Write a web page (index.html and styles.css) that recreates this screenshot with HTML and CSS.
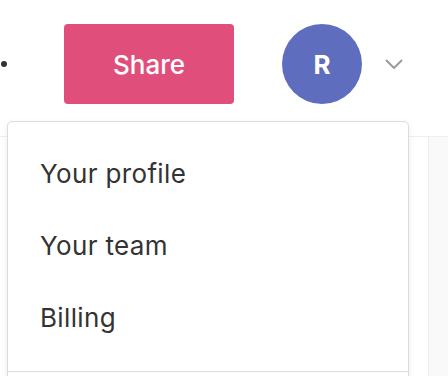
FILE: index.html
```html
<!DOCTYPE html>
<html>
<head>
<meta charset="utf-8">
<link rel="stylesheet" href="styles.css">
</head>
<body>
<div class="page">
  <header class="topbar">
    <span class="dot"></span>
    <button class="share">Share</button>
    <div class="avatar">R</div>
    <svg class="chevron" width="18" height="10" viewBox="0 0 18 10"><path d="M1 1 L9 9 L17 1" fill="none" stroke="#9a9a9a" stroke-width="2"/></svg>
  </header>
  <div class="body">
    <main class="content"><span class="behind">Settings</span></main>
    <aside class="sidebar"></aside>
  </div>
  <nav class="menu">
    <a class="item">Your profile</a>
    <a class="item">Your team</a>
    <a class="item">Billing</a>
    <div class="divider"></div>
    <div class="rest"></div>
  </nav>
</div>
</body>
</html>
```
FILE: styles.css
```css
* { box-sizing: border-box; }
html, body { margin: 0; padding: 0; background: #fff; }
body { font-family: Inter, "Noto Sans", sans-serif; color: #333; overflow: hidden; }
.page { position: relative; width: 448px; height: 376px; overflow: hidden; }
.topbar {
  height: 137px;
  border-bottom: 1px solid #efefef;
  display: flex;
  align-items: flex-start;
  padding-top: 24px;
}
.dot {
  width: 6px; height: 6px; border-radius: 50%; background: #333;
  margin-left: 1px; margin-top: 37px;
}
.share {
  margin-left: 57px;
  width: 170px; height: 80px;
  border: none; border-radius: 4px;
  background: #e04f7c; color: #fff;
  font-family: Inter, "Noto Sans", sans-serif;
  font-size: 26px; font-weight: 500;
  padding: 0;
}
.avatar {
  margin-left: 48px;
  width: 80px; height: 80px; border-radius: 50%;
  background: #5f6dbf; color: #fff;
  display: flex; align-items: center; justify-content: center;
  font-size: 26px; font-weight: 700;
}
.chevron { margin-left: 23px; margin-top: 35px; }
.body { display: flex; height: 239px; }
.content { flex: 0 0 428px; position: relative; }
.behind { position: absolute; left: -78px; top: 122px; font-size: 20px; color: #777; }
.sidebar { flex: 1; border-left: 1px solid #ececec; background: #f9f9f9; }
.menu {
  position: absolute; left: 7px; top: 121px; width: 402px;
  background: #fff; border: 1px solid #dcdcdc; border-radius: 5px;
  box-shadow: 0 2px 6px rgba(0,0,0,0.08);
  padding-top: 16px;
  display: flex; flex-direction: column;
}
.item {
  display: block; height: 72px; line-height: 72px;
  padding-left: 32px; font-size: 26px; letter-spacing: 0.35px; color: #333;
}
.divider { height: 1px; background: #dcdcdc; margin-top: 17px; }
.rest { height: 40px; }
```
